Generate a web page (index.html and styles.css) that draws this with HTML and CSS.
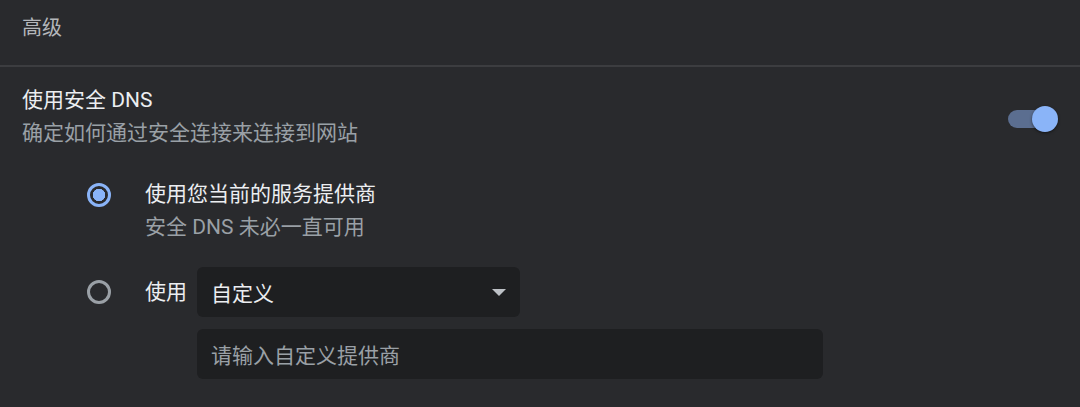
FILE: index.html
```html
<!DOCTYPE html>
<html lang="zh-CN">
<head>
<meta charset="utf-8">
<link rel="stylesheet" href="styles.css">
</head>
<body>
<div class="page">
  <div class="header">高级</div>
  <div class="divider"></div>
  <div class="setting">
    <div class="setting-text">
      <div class="title">使用安全 DNS</div>
      <div class="sub">确定如何通过安全连接来连接到网站</div>
    </div>
    <div class="toggle"><span class="track"></span><span class="knob"></span></div>
  </div>
  <div class="options">
    <div class="option">
      <span class="radio checked"></span>
      <div class="option-text">
        <div class="title">使用您当前的服务提供商</div>
        <div class="sub">安全 DNS 未必一直可用</div>
      </div>
    </div>
    <div class="option custom">
      <span class="radio"></span>
      <div class="custom-body">
        <div class="custom-row">
          <span class="title">使用</span>
          <div class="select"><span>自定义</span><span class="arrow"></span></div>
        </div>
        <div class="input">请输入自定义提供商</div>
      </div>
    </div>
  </div>
</div>
</body>
</html>
```

FILE: styles.css
```css
html, body {
  margin: 0;
  padding: 0;
  background: #292a2d;
}
body {
  width: 1080px;
  height: 407px;
  overflow: hidden;
  font-family: Roboto, "Noto Sans CJK SC", sans-serif;
  font-size: 21px;
  color: #e8eaed;
}
.page {
  display: flex;
  flex-direction: column;
}
.header {
  height: 65px;
  line-height: 56px;
  padding-left: 22px;
  font-size: 20px;
  color: #b4b7bb;
}
.divider {
  height: 2px;
  background: #3c3d40;
}
.setting {
  display: flex;
  align-items: center;
  justify-content: space-between;
  padding: 17px 22px 0 22px;
}
.title {
  line-height: 33px;
  color: #eceef1;
}
.sub {
  line-height: 33px;
  color: #9aa0a6;
}
.toggle {
  position: relative;
  width: 50px;
  height: 26px;
  margin-top: 4px;
}
.track {
  position: absolute;
  left: 0;
  top: 4px;
  width: 44px;
  height: 18px;
  border-radius: 9px;
  background: #5b6e90;
}
.knob {
  position: absolute;
  right: 0;
  top: 0;
  width: 26px;
  height: 26px;
  border-radius: 50%;
  background: #8ab4f8;
  box-shadow: 0 1px 3px rgba(0,0,0,0.5);
}
.options {
  display: flex;
  flex-direction: column;
  padding-left: 87px;
  padding-top: 28px;
  gap: 23px;
}
.option {
  display: flex;
  align-items: flex-start;
  gap: 34px;
}
.radio {
  box-sizing: border-box;
  width: 24px;
  height: 24px;
  border-radius: 50%;
  border: 3px solid #9aa0a6;
  margin-top: 5px;
  flex: none;
}
.radio.checked {
  border-color: #8ab4f8;
  background: radial-gradient(circle, #8ab4f8 0 6px, transparent 6.5px);
}
.custom .radio {
  margin-top: 13px;
}
.custom-body {
  display: flex;
  flex-direction: column;
  gap: 12px;
}
.custom-row {
  display: flex;
  align-items: center;
  gap: 10px;
}
.select {
  box-sizing: border-box;
  width: 323px;
  height: 50px;
  border-radius: 6px;
  background: #1e1f21;
  display: flex;
  align-items: center;
  justify-content: space-between;
  padding: 0 14px;
  color: #eceef1;
}
.arrow {
  width: 0;
  height: 0;
  border-left: 7px solid transparent;
  border-right: 7px solid transparent;
  border-top: 7px solid #bdc1c6;
}
.input {
  box-sizing: border-box;
  margin-left: 52px;
  width: 626px;
  height: 50px;
  border-radius: 6px;
  background: #1e1f21;
  display: flex;
  align-items: center;
  padding: 0 14px;
  color: #9aa0a6;
}
```
